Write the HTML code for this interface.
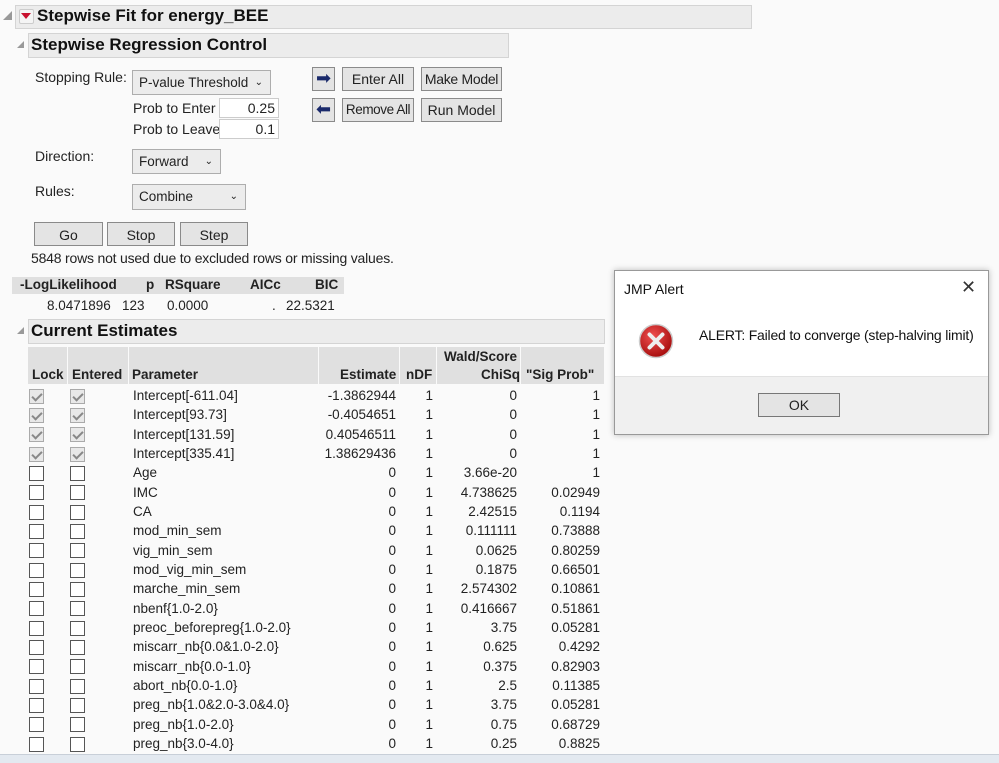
<!DOCTYPE html>
<html><head><meta charset="utf-8"><style>
*{margin:0;padding:0;box-sizing:border-box}
body{width:999px;height:763px;overflow:hidden;background:#fafafa;font-family:"Liberation Sans",sans-serif;font-size:13.5px;color:#222;position:relative}
.a{position:absolute;white-space:nowrap}
.hdr{position:absolute;background:#ececec;border:1px solid #d4d4d4}
.ht{font-weight:bold;font-size:17px;color:#111}
.btn{position:absolute;background:#e4e4e4;border:1px solid #8a8a8a;text-align:center;font-size:14px;color:#222;white-space:nowrap;overflow:hidden}
.cmb{position:absolute;background:#ececec;border:1px solid #adadad;font-size:13.5px;padding-left:6px;white-space:nowrap}
.cmb i{position:absolute;right:7px;top:0;font-style:normal;font-size:10px}
.inp{position:absolute;background:#fff;border:1px solid #ccc;text-align:right;padding-right:3px;font-size:14px}
.tri{position:absolute;width:0;height:0;border-left:9px solid transparent;border-bottom:9px solid #999}
table{border-collapse:collapse;table-layout:fixed}
td{padding:0;height:19.33px;font-size:13.5px;white-space:nowrap}
.cb{display:inline-block;width:15px;height:15px;border:1px solid #555;background:#fff;vertical-align:middle;position:relative}
.cb.c{border-color:#aaa;background:#e8e8e8}
.cb.c:after{content:"";position:absolute;left:4px;top:1px;width:4px;height:8px;border:solid #888;border-width:0 2px 2px 0;transform:rotate(45deg)}
.r{text-align:right;padding-right:4px}
</style></head><body>

<div class="tri" style="left:3px;top:11px"></div>
<div class="hdr" style="left:15px;top:5px;width:737px;height:24px"></div>
<div class="a" style="left:19px;top:9px;width:15px;height:15px;background:#f4f4f4;border:1px solid #ccc;border-radius:2px"></div>
<div class="a" style="left:21px;top:13px;width:0;height:0;border-left:5px solid transparent;border-right:5px solid transparent;border-top:6px solid #c8102e"></div>
<div class="a ht" style="left:37px;top:6px">Stepwise Fit for energy_BEE</div>

<div class="tri" style="left:17px;top:41px;border-left-width:7px;border-bottom-width:7px"></div>
<div class="hdr" style="left:28px;top:33px;width:481px;height:25px"></div>
<div class="a ht" style="left:31px;top:35px">Stepwise Regression Control</div>

<div class="a" style="left:35px;top:69px;font-size:14px">Stopping Rule:</div>
<div class="cmb" style="left:132px;top:70px;width:139px;height:25px;line-height:23px">P-value Threshold<i>&#8964;</i></div>
<div class="a" style="left:133px;top:100px;font-size:14px">Prob to Enter</div>
<div class="inp" style="left:219px;top:98px;width:60px;height:20px;line-height:18px">0.25</div>
<div class="a" style="left:133px;top:121px;font-size:14px">Prob to Leave</div>
<div class="inp" style="left:219px;top:119px;width:60px;height:20px;line-height:18px">0.1</div>

<div class="btn" style="left:312px;top:67px;width:23px;height:24px;line-height:20px;color:#1a2a6b;font-size:18px">&#10145;</div>
<div class="btn" style="left:342px;top:67px;width:72px;height:24px;line-height:22px">Enter All</div>
<div class="btn" style="left:421px;top:67px;width:81px;height:24px;line-height:22px;letter-spacing:-0.3px">Make Model</div>
<div class="btn" style="left:312px;top:98px;width:23px;height:24px;line-height:20px;color:#1a2a6b;font-size:18px">&#11013;</div>
<div class="btn" style="left:342px;top:98px;width:72px;height:24px;line-height:22px;font-size:13.5px;letter-spacing:-0.4px">Remove All</div>
<div class="btn" style="left:421px;top:98px;width:81px;height:24px;line-height:22px">Run Model</div>

<div class="a" style="left:35px;top:148px;font-size:14px">Direction:</div>
<div class="cmb" style="left:132px;top:149px;width:89px;height:25px;line-height:23px">Forward<i>&#8964;</i></div>
<div class="a" style="left:35px;top:183px;font-size:14px">Rules:</div>
<div class="cmb" style="left:132px;top:184px;width:114px;height:26px;line-height:24px">Combine<i>&#8964;</i></div>

<div class="btn" style="left:34px;top:222px;width:69px;height:24px;line-height:24px">Go</div>
<div class="btn" style="left:107px;top:222px;width:68px;height:24px;line-height:24px">Stop</div>
<div class="btn" style="left:180px;top:222px;width:68px;height:24px;line-height:24px">Step</div>
<div class="a" style="left:31px;top:250px;font-size:14px;letter-spacing:-0.2px">5848 rows not used due to excluded rows or missing values.</div>

<div class="a" style="left:12px;top:277px;width:332px;height:17px;background:#e0e0e0"></div>
<div class="a" style="left:20px;top:277px;font-weight:bold">-LogLikelihood</div>
<div class="a" style="left:146px;top:277px;font-weight:bold">p</div>
<div class="a" style="left:165px;top:277px;font-weight:bold">RSquare</div>
<div class="a" style="left:250px;top:277px;font-weight:bold">AICc</div>
<div class="a" style="left:315px;top:277px;font-weight:bold">BIC</div>
<div class="a" style="left:47px;top:298px">8.0471896</div>
<div class="a" style="left:122px;top:298px">123</div>
<div class="a" style="left:167px;top:298px">0.0000</div>
<div class="a" style="left:272px;top:298px">.</div>
<div class="a" style="left:286px;top:298px">22.5321</div>

<div class="tri" style="left:17px;top:327px;border-left-width:7px;border-bottom-width:7px"></div>
<div class="hdr" style="left:28px;top:319px;width:577px;height:25px"></div>
<div class="a ht" style="left:31px;top:321px">Current Estimates</div>

<div class="a" style="left:28px;top:347px;width:576px;height:37px;background:#e0e0e0"></div>
<div class="a" style="left:67px;top:347px;width:1px;height:37px;background:#fafafa"></div>
<div class="a" style="left:128px;top:347px;width:1px;height:37px;background:#fafafa"></div>
<div class="a" style="left:318px;top:347px;width:1px;height:37px;background:#fafafa"></div>
<div class="a" style="left:399px;top:347px;width:1px;height:37px;background:#fafafa"></div>
<div class="a" style="left:436px;top:347px;width:1px;height:37px;background:#fafafa"></div>
<div class="a" style="left:520px;top:347px;width:1px;height:37px;background:#fafafa"></div>
<div class="a" style="left:32px;top:367px;font-weight:bold">Lock</div>
<div class="a" style="left:72px;top:367px;font-weight:bold">Entered</div>
<div class="a" style="left:132px;top:367px;font-weight:bold">Parameter</div>
<div class="a" style="left:340px;top:367px;font-weight:bold">Estimate</div>
<div class="a" style="left:406px;top:367px;font-weight:bold">nDF</div>
<div class="a" style="left:444px;top:349px;font-weight:bold">Wald/Score</div>
<div class="a" style="left:481px;top:367px;font-weight:bold">ChiSq</div>
<div class="a" style="left:526px;top:367px;font-weight:bold">"Sig Prob"</div>

<table class="a" style="left:28px;top:386px;width:576px">
<colgroup><col style="width:40px"><col style="width:61px"><col style="width:190px"><col style="width:81px"><col style="width:37px"><col style="width:84px"><col style="width:83px"></colgroup>
<tr><td style="padding-left:1px"><span class="cb c"></span></td><td style="padding-left:2px"><span class="cb c"></span></td><td style="padding-left:4px">Intercept[-611.04]</td><td class="r">-1.3862944</td><td class="r">1</td><td class="r">0</td><td class="r">1</td></tr>
<tr><td style="padding-left:1px"><span class="cb c"></span></td><td style="padding-left:2px"><span class="cb c"></span></td><td style="padding-left:4px">Intercept[93.73]</td><td class="r">-0.4054651</td><td class="r">1</td><td class="r">0</td><td class="r">1</td></tr>
<tr><td style="padding-left:1px"><span class="cb c"></span></td><td style="padding-left:2px"><span class="cb c"></span></td><td style="padding-left:4px">Intercept[131.59]</td><td class="r">0.40546511</td><td class="r">1</td><td class="r">0</td><td class="r">1</td></tr>
<tr><td style="padding-left:1px"><span class="cb c"></span></td><td style="padding-left:2px"><span class="cb c"></span></td><td style="padding-left:4px">Intercept[335.41]</td><td class="r">1.38629436</td><td class="r">1</td><td class="r">0</td><td class="r">1</td></tr>
<tr><td style="padding-left:1px"><span class="cb"></span></td><td style="padding-left:2px"><span class="cb"></span></td><td style="padding-left:4px">Age</td><td class="r">0</td><td class="r">1</td><td class="r">3.66e-20</td><td class="r">1</td></tr>
<tr><td style="padding-left:1px"><span class="cb"></span></td><td style="padding-left:2px"><span class="cb"></span></td><td style="padding-left:4px">IMC</td><td class="r">0</td><td class="r">1</td><td class="r">4.738625</td><td class="r">0.02949</td></tr>
<tr><td style="padding-left:1px"><span class="cb"></span></td><td style="padding-left:2px"><span class="cb"></span></td><td style="padding-left:4px">CA</td><td class="r">0</td><td class="r">1</td><td class="r">2.42515</td><td class="r">0.1194</td></tr>
<tr><td style="padding-left:1px"><span class="cb"></span></td><td style="padding-left:2px"><span class="cb"></span></td><td style="padding-left:4px">mod_min_sem</td><td class="r">0</td><td class="r">1</td><td class="r">0.111111</td><td class="r">0.73888</td></tr>
<tr><td style="padding-left:1px"><span class="cb"></span></td><td style="padding-left:2px"><span class="cb"></span></td><td style="padding-left:4px">vig_min_sem</td><td class="r">0</td><td class="r">1</td><td class="r">0.0625</td><td class="r">0.80259</td></tr>
<tr><td style="padding-left:1px"><span class="cb"></span></td><td style="padding-left:2px"><span class="cb"></span></td><td style="padding-left:4px">mod_vig_min_sem</td><td class="r">0</td><td class="r">1</td><td class="r">0.1875</td><td class="r">0.66501</td></tr>
<tr><td style="padding-left:1px"><span class="cb"></span></td><td style="padding-left:2px"><span class="cb"></span></td><td style="padding-left:4px">marche_min_sem</td><td class="r">0</td><td class="r">1</td><td class="r">2.574302</td><td class="r">0.10861</td></tr>
<tr><td style="padding-left:1px"><span class="cb"></span></td><td style="padding-left:2px"><span class="cb"></span></td><td style="padding-left:4px">nbenf{1.0-2.0}</td><td class="r">0</td><td class="r">1</td><td class="r">0.416667</td><td class="r">0.51861</td></tr>
<tr><td style="padding-left:1px"><span class="cb"></span></td><td style="padding-left:2px"><span class="cb"></span></td><td style="padding-left:4px">preoc_beforepreg{1.0-2.0}</td><td class="r">0</td><td class="r">1</td><td class="r">3.75</td><td class="r">0.05281</td></tr>
<tr><td style="padding-left:1px"><span class="cb"></span></td><td style="padding-left:2px"><span class="cb"></span></td><td style="padding-left:4px">miscarr_nb{0.0&amp;1.0-2.0}</td><td class="r">0</td><td class="r">1</td><td class="r">0.625</td><td class="r">0.4292</td></tr>
<tr><td style="padding-left:1px"><span class="cb"></span></td><td style="padding-left:2px"><span class="cb"></span></td><td style="padding-left:4px">miscarr_nb{0.0-1.0}</td><td class="r">0</td><td class="r">1</td><td class="r">0.375</td><td class="r">0.82903</td></tr>
<tr><td style="padding-left:1px"><span class="cb"></span></td><td style="padding-left:2px"><span class="cb"></span></td><td style="padding-left:4px">abort_nb{0.0-1.0}</td><td class="r">0</td><td class="r">1</td><td class="r">2.5</td><td class="r">0.11385</td></tr>
<tr><td style="padding-left:1px"><span class="cb"></span></td><td style="padding-left:2px"><span class="cb"></span></td><td style="padding-left:4px">preg_nb{1.0&amp;2.0-3.0&amp;4.0}</td><td class="r">0</td><td class="r">1</td><td class="r">3.75</td><td class="r">0.05281</td></tr>
<tr><td style="padding-left:1px"><span class="cb"></span></td><td style="padding-left:2px"><span class="cb"></span></td><td style="padding-left:4px">preg_nb{1.0-2.0}</td><td class="r">0</td><td class="r">1</td><td class="r">0.75</td><td class="r">0.68729</td></tr>
<tr><td style="padding-left:1px"><span class="cb"></span></td><td style="padding-left:2px"><span class="cb"></span></td><td style="padding-left:4px">preg_nb{3.0-4.0}</td><td class="r">0</td><td class="r">1</td><td class="r">0.25</td><td class="r">0.8825</td></tr>
</table>

<div class="a" style="left:0;top:754px;width:999px;height:9px;background:#e3e9f0;border-top:1px solid #c8cfd8"></div>

<div class="a" style="left:614px;top:270px;width:375px;height:165px;background:#fff;border:1px solid #999;box-shadow:0 0 6px rgba(0,0,0,.25)">
  <div class="a" style="left:9px;top:10px;font-size:14px;color:#111">JMP Alert</div>
  <div class="a" style="left:346px;top:6px;font-size:18px;color:#333">&#10005;</div>
  <svg class="a" style="left:23px;top:52px" width="36" height="36" viewBox="0 0 36 36">
    <defs><radialGradient id="g" cx="40%" cy="35%" r="65%"><stop offset="0" stop-color="#f05050"/><stop offset="1" stop-color="#a80f0f"/></radialGradient></defs>
    <circle cx="18" cy="18" r="16.5" fill="url(#g)" stroke="#ccc" stroke-width="1.5"/>
    <path d="M11.5 11.5L24.5 24.5M24.5 11.5L11.5 24.5" stroke="#eee" stroke-width="4" stroke-linecap="round"/>
  </svg>
  <div class="a" style="left:84px;top:56px;font-size:14px;color:#111;letter-spacing:-0.2px">ALERT: Failed to converge (step-halving limit)</div>
  <div class="a" style="left:0;top:105px;width:373px;height:58px;background:#f0f0f0;border-top:1px solid #e2e2e2"></div>
  <div class="btn" style="left:143px;top:122px;width:82px;height:24px;line-height:22px;border-color:#777">OK</div>
</div>
</body></html>
